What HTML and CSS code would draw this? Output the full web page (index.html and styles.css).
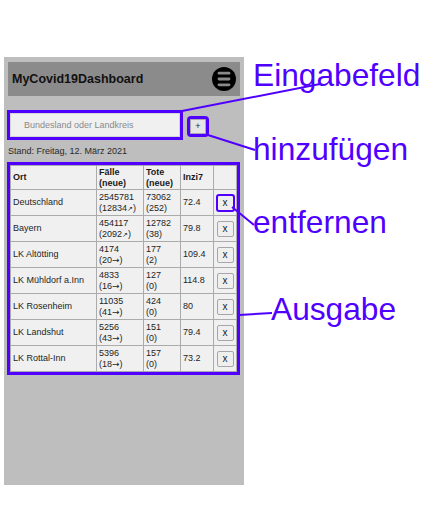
FILE: index.html
```html
<!DOCTYPE html>
<html lang="de">
<head>
<meta charset="utf-8">
<title>MyCovid19Dashboard</title>
<link rel="stylesheet" href="styles.css">
</head>
<body>
<div class="stage">
  <div class="phone">
    <header class="bar">
      <h1 class="title">MyCovid19Dashboard</h1>
      <svg class="menu" width="24" height="24" viewBox="0 0 24 24" aria-label="Menü">
        <circle cx="12" cy="12" r="12" fill="#000"/>
        <g stroke="#8a8a8a" stroke-width="2.8" stroke-linecap="round">
          <line x1="7" y1="6.2" x2="17" y2="6.2"/>
          <line x1="7" y1="12" x2="17" y2="12"/>
          <line x1="7" y1="17.8" x2="17" y2="17.8"/>
        </g>
      </svg>
    </header>
    <div class="form">
      <input class="search hl" type="text" placeholder="Bundesland oder Landkreis">
      <button class="add hl" type="button">+</button>
    </div>
    <div class="stand">Stand: Freitag, 12. März 2021</div>
    <table class="data hl">
      <colgroup>
        <col class="c-ort"><col class="c-faelle"><col class="c-tote"><col class="c-inz"><col class="c-del">
      </colgroup>
      <thead>
        <tr><th>Ort</th><th>Fälle<br>(neue)</th><th>Tote<br>(neue)</th><th>Inzi7</th><th></th></tr>
      </thead>
      <tbody>
        <tr><td>Deutschland</td><td>2545781<br>(12834<span class="up">↗</span>)</td><td>73062<br>(252)</td><td>72.4</td><td><button class="del hl-del" type="button">x</button></td></tr>
        <tr><td>Bayern</td><td>454117<br>(2092<span class="up">↗</span>)</td><td>12782<br>(38)</td><td>79.8</td><td><button class="del" type="button">x</button></td></tr>
        <tr><td>LK Altötting</td><td>4174<br>(20<span class="arr">→</span>)</td><td>177<br>(2)</td><td>109.4</td><td><button class="del" type="button">x</button></td></tr>
        <tr><td>LK Mühldorf a.Inn</td><td>4833<br>(16<span class="arr">→</span>)</td><td>127<br>(0)</td><td>114.8</td><td><button class="del" type="button">x</button></td></tr>
        <tr><td>LK Rosenheim</td><td>11035<br>(41<span class="arr">→</span>)</td><td>424<br>(0)</td><td>80</td><td><button class="del" type="button">x</button></td></tr>
        <tr><td>LK Landshut</td><td>5256<br>(43<span class="arr">→</span>)</td><td>151<br>(0)</td><td>79.4</td><td><button class="del" type="button">x</button></td></tr>
        <tr><td>LK Rottal-Inn</td><td>5396<br>(18<span class="arr">→</span>)</td><td>157<br>(0)</td><td>73.2</td><td><button class="del" type="button">x</button></td></tr>
      </tbody>
    </table>
  </div>
  <svg class="notes" width="423" height="523" viewBox="0 0 423 523">
    <g class="note-lines">
      <line x1="182" y1="111" x2="320" y2="84"/>
      <line x1="208" y1="135" x2="255" y2="150"/>
      <line x1="232" y1="207" x2="254" y2="225"/>
      <line x1="239" y1="315" x2="272" y2="313"/>
    </g>
    <g class="note-text">
      <text x="253" y="86">Eingabefeld</text>
      <text x="253" y="160">hinzufügen</text>
      <text x="253" y="233">entfernen</text>
      <text x="271" y="320">Ausgabe</text>
    </g>
  </svg>
</div>
</body>
</html>
```
FILE: styles.css
```css
html, body {
  margin: 0;
  padding: 0;
  background: #fff;
}
body {
  font-family: "Liberation Sans", Arial, sans-serif;
  color: #1e1e1e;
  overflow: hidden;
}
.stage {
  position: relative;
  width: 423px;
  height: 523px;
  padding: 57px 0 0 4px;
  box-sizing: border-box;
}
.phone {
  width: 240px;
  height: 428px;
  box-sizing: border-box;
  padding: 5px 4px;
  background: #bebebe;
}
.bar {
  height: 34px;
  background: #8b8b8b;
  display: flex;
  align-items: center;
  justify-content: space-between;
  padding: 0 4px;
}
.title {
  margin: 0;
  font-size: 12.5px;
  font-weight: bold;
  color: #111;
}
.menu {
  display: block;
}
.form {
  display: flex;
  align-items: center;
  gap: 10px;
  margin: 17px 0 0 2px;
}
.hl {
  outline: 3px solid #5000ff;
}
.search {
  width: 170px;
  height: 24px;
  box-sizing: border-box;
  margin: 0;
  padding: 0 0 0 13px;
  border: 1px solid #d4d4d4;
  background: #f0f0f0;
  font-family: "Liberation Sans", Arial, sans-serif;
  font-size: 9px;
  color: #333;
}
.search::placeholder {
  color: #8a8a8a;
}
.add {
  width: 16px;
  height: 15px;
  margin: 2px 0 0;
  padding: 0;
  box-sizing: border-box;
  border: 1px solid #aaa;
  border-radius: 1px;
  background: #e6e6e6;
  font-family: "Liberation Sans", Arial, sans-serif;
  font-size: 9px;
  line-height: 12px;
  color: #222;
}
.stand {
  margin: 9px 0 0;
  font-size: 9px;
  line-height: 11px;
  color: #2a2a2a;
}
.data {
  margin: 8px 0 0 2px;
  width: 226px;
  table-layout: fixed;
  border-collapse: collapse;
  background: #f0f0f0;
  font-size: 9px;
  line-height: 11px;
}
.c-ort { width: 86px; }
.c-faelle { width: 47px; }
.c-tote { width: 37px; }
.c-inz { width: 33px; }
.c-del { width: 23px; }
.data th,
.data td {
  border: 1px solid #ababab;
  text-align: left;
  vertical-align: middle;
  padding: 1.5px 2px;
  white-space: nowrap;
}
.data th {
  font-weight: bold;
  padding: 0.5px 2px;
  color: #1a1a1a;
}
.data td:last-child {
  text-align: center;
  padding: 0;
}
.up {
  font-size: 7px;
}
.arr {
  font-family: "DejaVu Sans", sans-serif;
  font-size: 9px;
}
.del {
  width: 17px;
  height: 16px;
  margin: 0;
  padding: 0;
  box-sizing: border-box;
  border: 1px solid #a6a6a6;
  border-radius: 2px;
  background: #efefef;
  font-family: "Liberation Sans", Arial, sans-serif;
  font-size: 10px;
  line-height: 13px;
  color: #222;
  vertical-align: middle;
}
.hl-del {
  outline: 2.5px solid #5000ff;
  outline-offset: -1px;
}
.notes {
  position: absolute;
  top: 0;
  left: 0;
  pointer-events: none;
}
.note-lines line {
  stroke: #5000ff;
  stroke-width: 2;
}
.note-text text {
  fill: #5000ff;
  font-family: "Liberation Sans", Arial, sans-serif;
  font-size: 31.7px;
}
```
